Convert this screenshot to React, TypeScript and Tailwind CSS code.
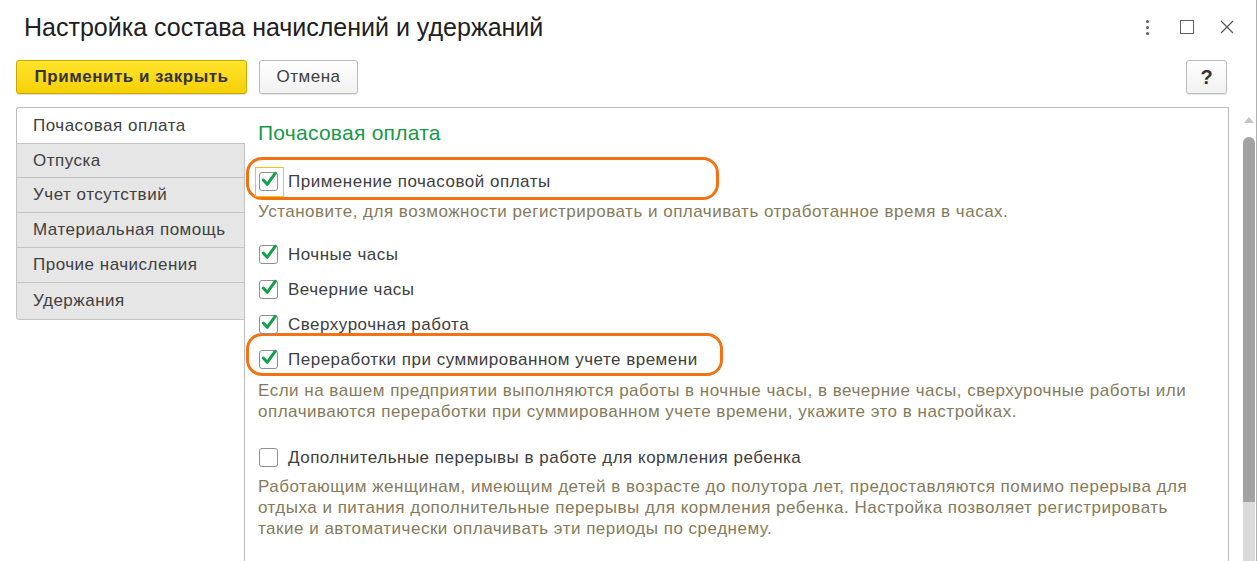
import React from "react";

const tabs = [
  "Почасовая оплата",
  "Отпуска",
  "Учет отсутствий",
  "Материальная помощь",
  "Прочие начисления",
  "Удержания",
];

function Check({ checked, focused }: { checked: boolean; focused?: boolean }) {
  return (
    <span className="relative inline-flex w-[19px] h-[19px] shrink-0 rounded-[3px] border border-[#8f8f8f] bg-white items-center justify-center">
      {focused && (
        <span className="absolute -left-[5px] -top-[6px] w-[29px] h-[30px] border border-[#f3c412]" />
      )}
      {checked && (
        <svg viewBox="0 0 16 16" className="w-[17px] h-[17px] -mt-[4px] ml-[1px]">
          <path
            d="M2.3 8.6 L6.2 12.8 L14.2 1.8"
            fill="none"
            stroke="#14a049"
            strokeWidth="3"
            strokeLinecap="round"
            strokeLinejoin="round"
          />
        </svg>
      )}
    </span>
  );
}

function Row({ label, checked, focused }: { label: string; checked: boolean; focused?: boolean }) {
  return (
    <div className="flex items-center h-[35px] pl-[1px]">
      <Check checked={checked} focused={focused} />
      <span className="ml-[10px] text-[17px] tracking-[0.5px] text-[#404040] whitespace-nowrap">{label}</span>
    </div>
  );
}

export default function App() {
  return (
    <div
      className="w-[1257px] h-[561px] bg-white border-r border-[#b4b4b4] flex flex-col overflow-hidden"
      style={{ fontFamily: '"Liberation Sans", Arial, sans-serif' }}
    >
      {/* header */}
      <div className="h-[54px] flex items-center pl-[24px] pr-[22px] shrink-0">
        <h1 className="text-[25px] text-[#202020] flex-1 pt-[1px]">Настройка состава начислений и удержаний</h1>
        <div className="flex flex-col gap-[3px] items-center w-[4px] mr-[31px]">
          <span className="w-[3px] h-[3px] rounded-full bg-[#606060]" />
          <span className="w-[3px] h-[3px] rounded-full bg-[#606060]" />
          <span className="w-[3px] h-[3px] rounded-full bg-[#606060]" />
        </div>
        <span className="w-[14px] h-[14px] border-[1.5px] border-[#606060] mr-[26px]" />
        <svg viewBox="0 0 14 14" className="w-[14px] h-[14px]">
          <path d="M1 1 L13 13 M13 1 L1 13" stroke="#555" strokeWidth="1.2" />
        </svg>
      </div>

      {/* toolbar */}
      <div className="flex items-center pt-[6px] pl-[16px] pr-[29px] shrink-0">
        <button className="h-[34px] w-[231px] rounded-[3px] border border-[#c8a800] bg-gradient-to-b from-[#ffe42a] to-[#f5d000] text-[17px] tracking-[0.5px] font-bold text-[#333] shadow-[0_1px_1px_rgba(0,0,0,0.15)]">
          Применить и закрыть
        </button>
        <button className="ml-[12px] h-[34px] w-[99px] rounded-[3px] border border-[#bcbcbc] bg-gradient-to-b from-white to-[#f1f1f1] text-[17px] tracking-[0.5px] text-[#404040] shadow-[0_1px_1px_rgba(0,0,0,0.1)]">
          Отмена
        </button>
        <div className="flex-1" />
        <button className="h-[34px] w-[41px] rounded-[3px] border border-[#bcbcbc] bg-gradient-to-b from-white to-[#f1f1f1] text-[20px] font-bold text-[#333] shadow-[0_1px_1px_rgba(0,0,0,0.1)]">
          ?
        </button>
      </div>

      {/* main */}
      <div className="flex flex-1 min-h-0 mt-[13px] pl-[16px]">
        {/* tabs */}
        <div className="w-[229px] flex flex-col shrink-0">
          {tabs.map((t, i) =>
            i === 0 ? (
              <div
                key={t}
                className="h-[36px] flex items-center pl-[16px] bg-white border-l border-t border-[#bdbdbd] rounded-tl-[3px] text-[17px] tracking-[0.5px] text-[#404040]"
              >
                {t}
              </div>
            ) : (
              <div
                key={t}
                className={`h-[35px] flex items-center pl-[16px] bg-[#e6e6e6] border-l border-r border-b border-[#c4c4c4] text-[17px] tracking-[0.5px] text-[#404040] ${
                  i === tabs.length - 1 ? "h-[37px] rounded-bl-[4px]" : ""
                } ${i === 1 ? "border-t" : ""}`}
              >
                {t}
              </div>
            )
          )}
          <div className="flex-1 border-r border-[#bdbdbd]" />
        </div>

        {/* content panel */}
        <div className="relative w-[984px] border-t border-r border-[#bdbdbd] pl-[13px] pt-[12px] shrink-0">
          <span className="absolute left-[1px] top-[49px] w-[473px] h-[43px] rounded-[16px] border-[3px] border-[#f47216]" />
          <span className="absolute left-[1px] top-[225px] w-[477px] h-[43px] rounded-[16px] border-[3px] border-[#f47216]" />

          <h2 className="text-[21px] tracking-[0.25px] text-[#17994a] leading-[26px]">Почасовая оплата</h2>

          <div className="mt-[18px]">
            <Row label="Применение почасовой оплаты" checked focused />
          </div>
          <p className="mt-[2px] text-[17px] tracking-[0.5px] leading-[21px] text-[#857b5c]">
            Установите, для возможности регистрировать и оплачивать отработанное время в часах.
          </p>

          <div className="mt-[15px]">
            <Row label="Ночные часы" checked />
            <Row label="Вечерние часы" checked />
            <Row label="Сверхурочная работа" checked />
            <Row label="Переработки при суммированном учете времени" checked />
          </div>
          <p className="mt-[3px] text-[17px] tracking-[0.5px] leading-[21px] text-[#857b5c] whitespace-nowrap">
            Если на вашем предприятии выполняются работы в ночные часы, в вечерние часы, сверхурочные работы или
            <br />
            оплачиваются переработки при суммированном учете времени, укажите это в настройках.
          </p>

          <div className="mt-[18px]">
            <Row label="Дополнительные перерывы в работе для кормления ребенка" checked={false} />
          </div>
          <p className="mt-[1px] text-[17px] tracking-[0.5px] leading-[21px] text-[#857b5c] whitespace-nowrap">
            Работающим женщинам, имеющим детей в возрасте до полутора лет, предоставляются помимо перерыва для
            <br />
            отдыха и питания дополнительные перерывы для кормления ребенка. Настройка позволяет регистрировать
            <br />
            такие и автоматически оплачивать эти периоды по среднему.
          </p>
        </div>

        {/* scrollbar */}
        <div className="ml-[13px] w-[13px] flex flex-col items-center">
          <svg viewBox="0 0 10 6" className="w-[10px] h-[6px] mt-[10px]">
            <path d="M0 6 L5 0 L10 6 Z" fill="#c4c4c4" />
          </svg>
          <div className="mt-[14px] w-[12px] h-[371px] rounded-[6px] bg-[#a3a3a3]" />
          <div className="w-[12px] flex-1 bg-[#dadada] -mt-[6px] -z-0" />
        </div>
      </div>
    </div>
  );
}
